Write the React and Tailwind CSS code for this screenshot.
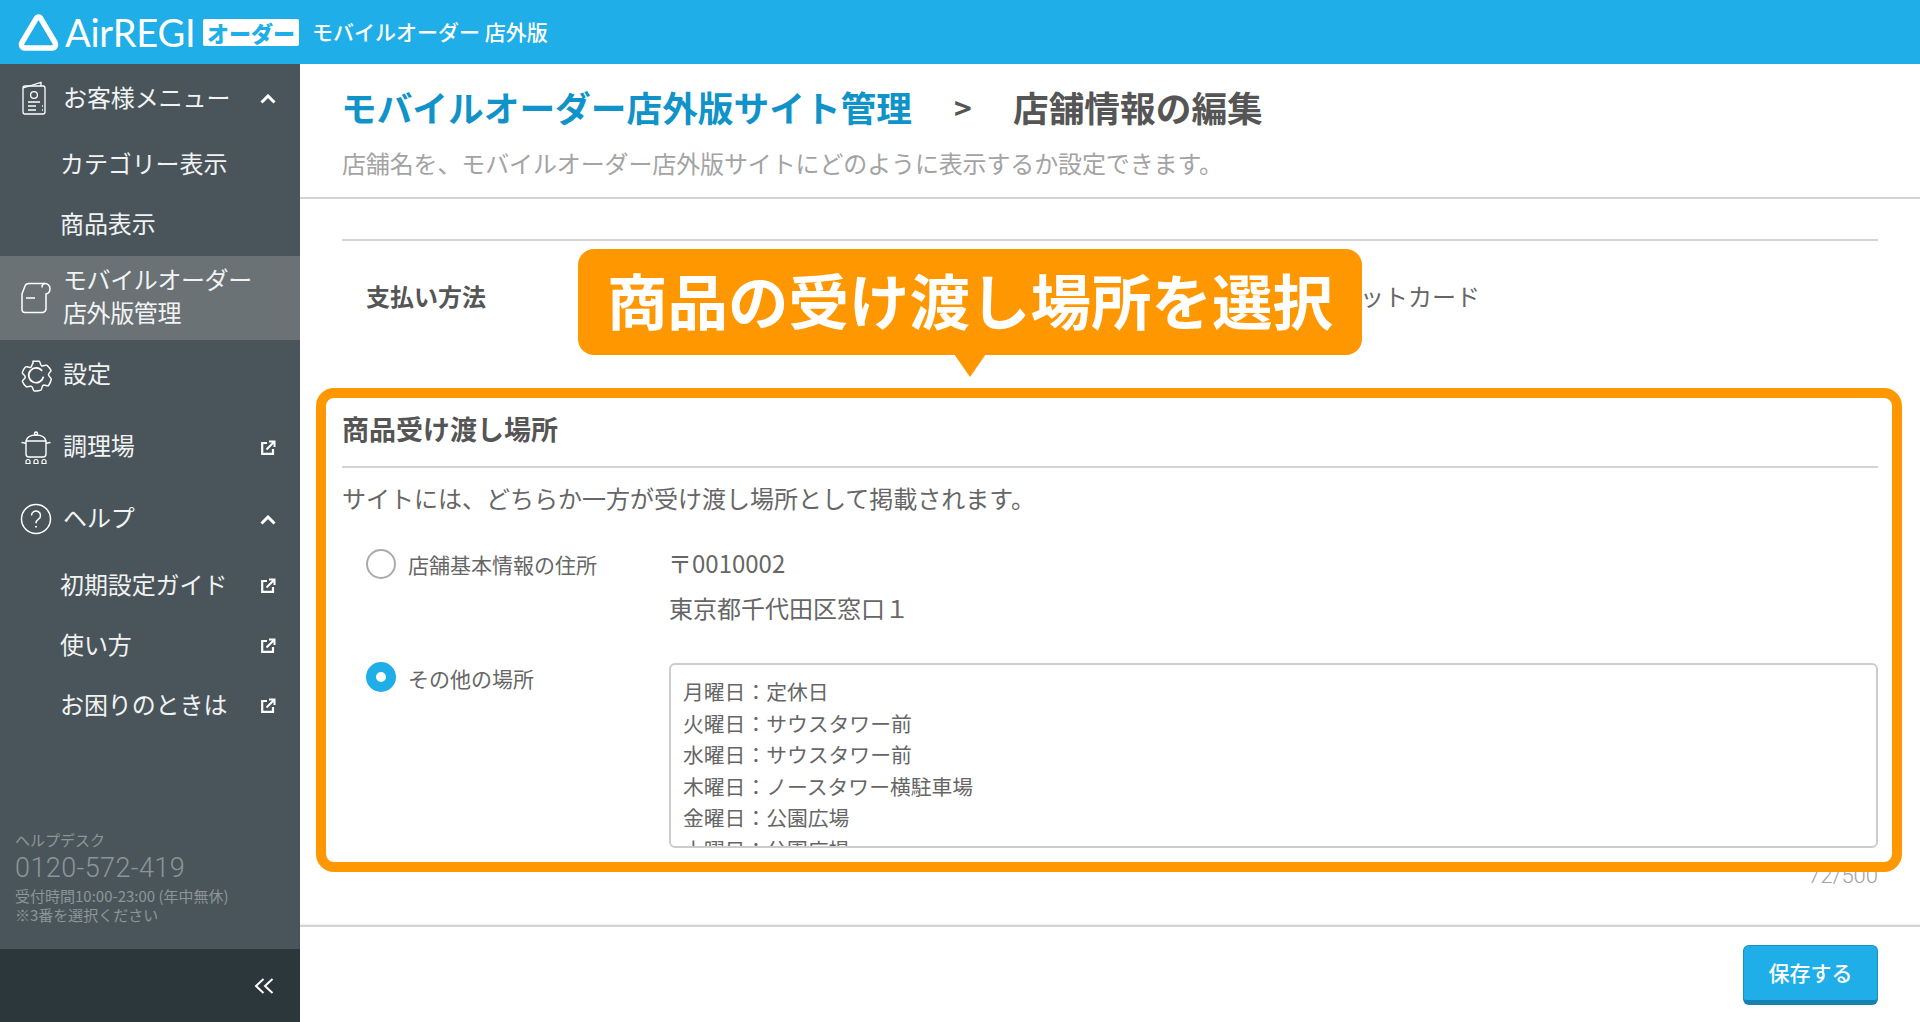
import React from "react";

const cjk = "font-['Noto_Sans_CJK_JP','Noto_Sans',sans-serif]";

const Ext = () => (
  <svg width="16" height="16" viewBox="0 0 16 16" fill="none" stroke="#fff" strokeWidth="2.2" className="shrink-0 mt-[1px]">
    <path d="M7 3H2.200v10.800H13V9" />
    <path d="M6.500 9.500L14 2M9 1.500h5.500V7" strokeWidth="2" />
  </svg>
);
const Chevron = () => (
  <svg width="16" height="10" viewBox="0 0 16 10" fill="none" stroke="#fff" strokeWidth="3" className="shrink-0 mt-[2px]">
    <path d="M1.500 8.500L8 2l6.500 6.500" />
  </svg>
);
const MenuIcon = () => (
  <svg width="28" height="36" viewBox="0 0 28 36" fill="none" stroke="#fff" strokeWidth="1.3">
    <rect x="3" y="6" width="22" height="28" rx="2" />
    <path d="M3 8L21 2.500V6" />
    <circle cx="14" cy="15" r="3.400" />
    <path d="M8 22h12M8 26h8M8 30h8M22 26h1M22 30h1" />
  </svg>
);
const MobileIcon = () => (
  <svg width="32" height="34" viewBox="0 0 32 34" fill="none" stroke="#fff" strokeWidth="1.500">
    <path d="M9 2.500h16a5 5 0 0 1 5 5c0 3-1 5-4 5.500v15a4 4 0 0 1-3 3.500H5a3 3 0 0 1-3-3V13l3-8c.5-1.500 2-2.500 4-2.500z" />
    <path d="M25 2.500c-2 0-3 2-3 4M6 17h9" />
  </svg>
);
const GearIcon = () => (
  <svg width="32" height="32" viewBox="3 3.500 26 26" fill="none" stroke="#fff" strokeWidth="1.200">
    <path d="M13.500 2c1.500 0 3.500 0 5 0 1 0 .8 3 2 3.700 1.200.7 3.500-1 4.400-.4 1.200.9 2.400 2.600 3.200 4 .5.900-2 2.300-2 3.700s2.600 2.800 2.300 3.900c-.4 1.500-1.200 3.500-2.200 4.800-.7.900-3-.8-4.300-.2-1.300.6-1 3.500-2 4-1.500.6-3.700.8-5.300.6-1.100-.1-1-3-2.200-3.700-1.200-.7-3.500 1-4.400.2-1.200-1-2.400-2.700-3-4.200-.4-1 2.300-2 2.300-3.500s-2.700-2.700-2.400-3.800c.4-1.500 1.400-3.300 2.500-4.500.7-.8 3 1 4.200.4 1.200-.6 1-3 1.900-3z" transform="translate(0 2.500)" strokeLinejoin="round" />
    <path d="M21 12.500A6 6 0 1 0 22 17" strokeWidth="1.400" />
  </svg>
);
const PotIcon = () => (
  <svg width="32" height="34" viewBox="0 0 32 34" fill="none" stroke="#fff" strokeWidth="1.400">
    <circle cx="16" cy="3.500" r="1.500" />
    <path d="M6 11c1-4 5-6 10-6s9 2 10 6zM1.500 12.500c2 0 4 .5 4.500 1.500M30.500 12.500c-2 0-4 .5-4.500 1.500M6 11.500V24a3 3 0 0 0 3 3h14a3 3 0 0 0 3-3V11.500" />
    <path d="M6 33.500v-2a2 2 0 0 1 4 0v2zM14 33.500v-2a2 2 0 0 1 4 0v2zM22 33.500v-2a2 2 0 0 1 4 0v2z" strokeWidth="1.200" />
  </svg>
);
const HelpIcon = () => (
  <svg width="32" height="32" viewBox="0 0 32 32" fill="none" stroke="#fff" strokeWidth="1.500">
    <circle cx="16" cy="16" r="14.500" />
    <path d="M11.500 12.500a4.500 4.500 0 1 1 7 3.700c-1.600 1.100-2.500 2-2.500 4" />
    <path d="M16 23v1.500" strokeWidth="1.800" />
  </svg>
);

function Row({ h, icon, label, right, active, labelClass = "pb-[5px]" }) {
  return (
    <div className={`flex items-center pl-[20px] pr-[24px] ${h} ${active ? "bg-[#6a7275]" : ""}`}>
      <div className="w-[43px] flex items-center justify-start shrink-0">{icon}</div>
      <div className={`flex-1 text-[24px] tracking-[-0.1px] ${labelClass}`}>{label}</div>
      {right}
    </div>
  );
}
function Sub({ label, right }) {
  return (
    <div className="h-[60px] flex items-center pl-[60px] pr-[24px]">
      <div className="flex-1 text-[24px] pb-[3px] tracking-[-0.1px]">{label}</div>
      {right}
    </div>
  );
}

const hours = [
  "月曜日：定休日",
  "火曜日：サウスタワー前",
  "水曜日：サウスタワー前",
  "木曜日：ノースタワー横駐車場",
  "金曜日：公園広場",
  "土曜日：公園広場",
];

export default function App() {
  return (
    <div className={`${cjk} w-[1920px] h-[1022px] overflow-hidden flex flex-col bg-white text-[#666]`}>
      <header className="h-16 shrink-0 bg-[#1faee7] flex items-center pl-[18px] text-white">
        <svg width="41" height="37" viewBox="0 0 41 37" fill="none" stroke="#fff" strokeWidth="5.500" strokeLinejoin="round" className="shrink-0">
          <path d="M20.500 3c-1 0-1.800.6-2.500 1.800L4 28.500c-1.200 2.200-.2 5.500 3 5.500h27c3.200 0 4.200-3.300 3-5.500L23 4.800c-.7-1.200-1.500-1.800-2.500-1.800z" />
        </svg>
        <span className="ml-[6px] font-['Lato',sans-serif] text-[38px] leading-none tracking-[-0.2px] w-[132px]">AirREGI</span>
        <span className="ml-[6px] w-[96px] h-[27px] bg-white rounded-[2px] text-[#1faee7] font-black text-[22px] leading-[27px] text-center">オーダー</span>
        <span className="ml-[13px] text-[21px] font-medium">モバイルオーダー 店外版</span>
      </header>

      <div className="flex-1 flex min-h-0">
        <aside className="w-[300px] shrink-0 bg-[#4a555b] flex flex-col text-[#f1f3f3]">
          <Row h="h-[68px]" icon={<MenuIcon />} labelClass="leading-[33px] pb-[3px]" label="お客様メニュー" right={<Chevron />} />
          <div className="pt-[2px] pb-[2px]">
            <Sub label="カテゴリー表示" />
            <Sub label="商品表示" />
          </div>
          <Row h="h-[84px]" active icon={<MobileIcon />} labelClass="leading-[33px] pb-[7px] tracking-[-0.4px]" label={<>モバイルオーダー<br />店外版管理</>} />
          <Row h="h-[71px]" icon={<GearIcon />} labelClass="leading-[33px] pb-[6px]" label="設定" />
          <Row h="h-[72px]" icon={<PotIcon />} labelClass="leading-[33px] pb-[5px]" label="調理場" right={<Ext />} />
          <Row h="h-[72px]" icon={<HelpIcon />} labelClass="leading-[33px] pb-[5px]" label="ヘルプ" right={<Chevron />} />
          <Sub label="初期設定ガイド" right={<Ext />} />
          <Sub label="使い方" right={<Ext />} />
          <Sub label="お困りのときは" right={<Ext />} />
          <div className="flex-1 flex flex-col justify-end pl-[15px] pb-[25px] text-[#8c9599]">
            <div className="text-[15px] leading-[22px]">ヘルプデスク</div>
            <div className="text-[27px] leading-[34px] font-['Roboto',sans-serif] font-light tracking-[0.4px]">0120-572-419</div>
            <div className="text-[15px] leading-[19px] mt-[1px]">受付時間10:00-23:00 (年中無休)</div>
            <div className="text-[15px] leading-[19px]">※3番を選択ください</div>
          </div>
          <div className="h-[73px] shrink-0 bg-[#2c373c] flex items-center justify-end pr-[26px]">
            <svg width="20" height="16" viewBox="0 0 20 16" fill="none" stroke="#fff" strokeWidth="2">
              <path d="M9.500 1L2 8l7.500 7M18.500 1L11 8l7.500 7" />
            </svg>
          </div>
        </aside>

        <main className="relative flex-1 min-w-0 flex flex-col">
          <div className="h-[135px] shrink-0 border-b-2 border-[#d4d4d4] px-[42px] pt-[16px]">
            <h1 className="flex text-[35.7px] leading-[54px] font-bold text-[#555]">
              <span className="text-[#0f93c8] w-[613px] shrink-0 -ml-[1px]">モバイルオーダー店外版サイト管理</span>
              <span className="w-[59px] shrink-0 text-[30px]">&gt;</span>
              <span>店舗情報の編集</span>
            </h1>
            <p className="mt-[12px] text-[24px] leading-[34px] text-[#a3a3a3] tracking-[-0.13px]">店舗名を、モバイルオーダー店外版サイトにどのように表示するか設定できます。</p>
          </div>

          <div className="flex-1 min-h-0 overflow-hidden px-[42px] pt-[40px]">
            <div className="border-t-2 border-[#d4d4d4] h-[116px] flex items-center pl-[24px] pb-[5px]">
              <div className="w-[304px] shrink-0 text-[24px] font-bold text-[#555]">支払い方法</div>
              <div className="ml-[618px] text-[24px] whitespace-nowrap">クレジットカード</div>
            </div>
            <div className="h-[113px] border-b-2 border-[#d4d4d4] flex items-end pb-[17px] text-[27px] font-bold leading-[40px] text-[#555]">商品受け渡し場所</div>
            <div className="h-[61px] flex items-center text-[24px] pb-[2px]">サイトには、どちらか一方が受け渡し場所として掲載されます。</div>
            <div className="h-[134px] flex items-start">
              <div className="w-[327px] shrink-0 flex items-start pl-[24px] pt-[20px]">
                <span className="w-[30px] h-[30px] rounded-full border-2 border-[#aaa] shrink-0" />
                <span className="ml-[12px] text-[21px] leading-[30px]">店舗基本情報の住所</span>
              </div>
              <div className="text-[24px] leading-[45px] pt-[11px]">
                <div className="-ml-[1px]">〒0010002</div>
                <div>東京都千代田区窓口１</div>
              </div>
            </div>
            <div className="flex items-start">
              <div className="w-[327px] shrink-0 flex items-start pl-[24px] -mt-[1px]">
                <span className="w-[30px] h-[30px] rounded-full border-[10px] border-[#1faee7] bg-white shrink-0" />
                <span className="ml-[12px] text-[21px] leading-[33px]">その他の場所</span>
              </div>
              <div className="flex-1 h-[185px] border-2 border-[#ccc] rounded-[6px] overflow-hidden px-[12px] pt-[11px] text-[20.8px] leading-[31.6px]">
                {hours.map((t) => (
                  <div key={t}>{t}</div>
                ))}
              </div>
            </div>
            <div className="mt-[14px] text-right text-[22px] leading-[28px] text-[#a3a3a3] font-['Roboto',sans-serif] font-light">72/500</div>
          </div>

          <div className="h-[97px] shrink-0 border-t-2 border-[#d4d4d4] shadow-[0_-1px_2px_rgba(0,0,0,0.08)] px-[42px] flex items-center justify-end">
            <button className="w-[135px] h-[60px] rounded-[6px] bg-[#1faee7] border border-[#1a8fc0] border-b-[5px] border-b-[#1581b0] text-white text-[21px] font-medium">保存する</button>
          </div>

          <div className="absolute left-[16px] top-[324px] w-[1586px] h-[484px] border-[10px] border-[#ff9800] rounded-[18px] pointer-events-none" />
          <div className="absolute left-[278px] top-[185px] w-[784px] h-[106px] rounded-[16px] bg-[#ff9800] flex items-center justify-center text-white font-bold text-[60.500px] leading-none pb-[5px]">
            商品の受け渡し場所を選択
            <svg width="32" height="23" viewBox="0 0 32 23" className="absolute left-[376px] top-[105px]">
              <path d="M0 0h32L16 23z" fill="#ff9800" />
            </svg>
          </div>
        </main>
      </div>
    </div>
  );
}
